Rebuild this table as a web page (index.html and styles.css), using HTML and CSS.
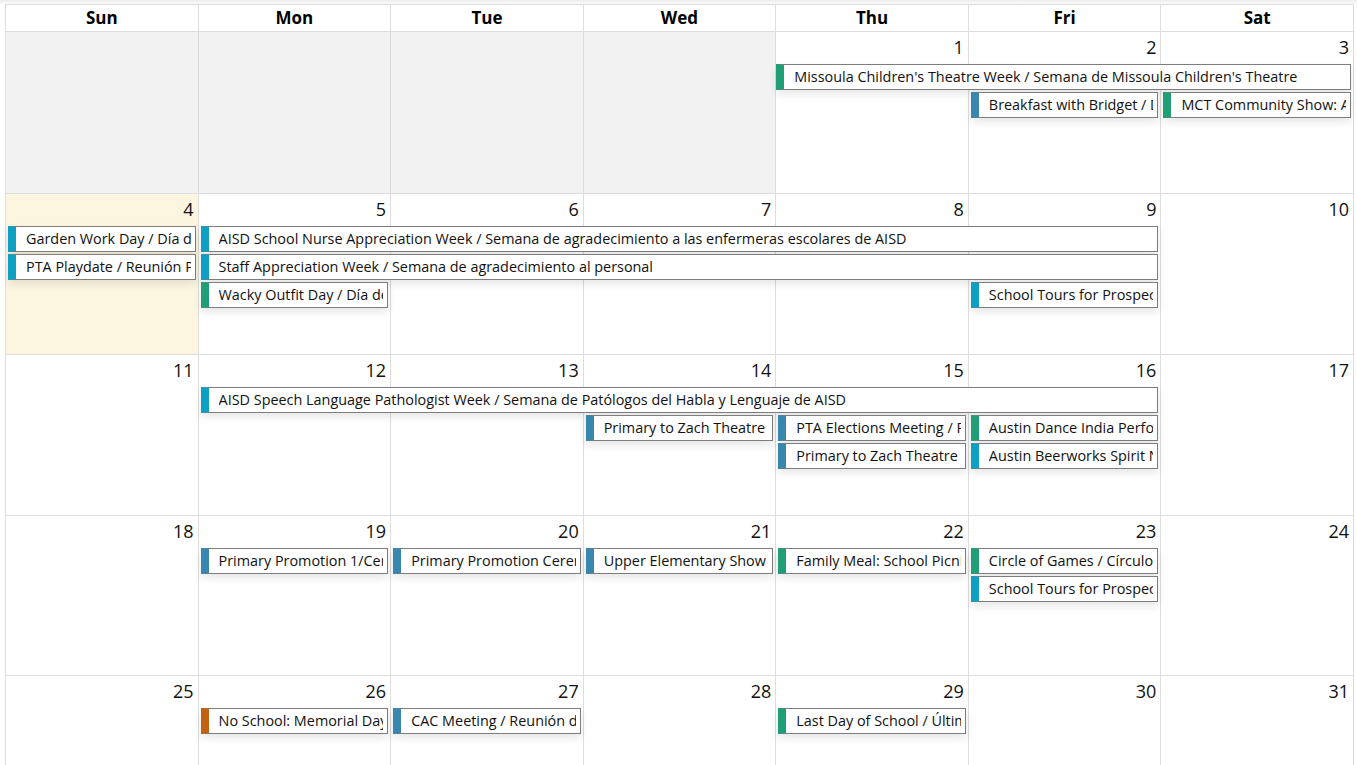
FILE: index.html
```html
<!DOCTYPE html>
<html lang="en">
<head>
<meta charset="utf-8">
<title>Calendar</title>
<link rel="stylesheet" href="styles.css">
</head>
<body>
<div class="topshade"></div>
<div class="calendar">
  <div class="head-row">
    <div class="head-cell">Sun</div>
    <div class="head-cell">Mon</div>
    <div class="head-cell">Tue</div>
    <div class="head-cell">Wed</div>
    <div class="head-cell">Thu</div>
    <div class="head-cell">Fri</div>
    <div class="head-cell">Sat</div>
  </div>

  <div class="week first">
    <div class="day other c1"></div>
    <div class="day other c2"></div>
    <div class="day other c3"></div>
    <div class="day other c4"></div>
    <div class="day c5"><span class="num">1</span></div>
    <div class="day c6"><span class="num">2</span></div>
    <div class="day c7"><span class="num">3</span></div>
    <div class="ev green r2 c5 s3 flush"><span class="t">Missoula Children's Theatre Week / Semana de Missoula Children's Theatre</span></div>
    <div class="ev steel r3 c6"><span class="t">Breakfast with Bridget / Desayuno con Bridget</span></div>
    <div class="ev green r3 c7"><span class="t">MCT Community Show: A Missoula Children's Theatre</span></div>
  </div>

  <div class="week">
    <div class="day today c1"><span class="num">4</span></div>
    <div class="day c2"><span class="num">5</span></div>
    <div class="day c3"><span class="num">6</span></div>
    <div class="day c4"><span class="num">7</span></div>
    <div class="day c5"><span class="num">8</span></div>
    <div class="day c6"><span class="num">9</span></div>
    <div class="day c7"><span class="num">10</span></div>
    <div class="ev cyan r2 c1"><span class="t">Garden Work Day / Día de trabajo en el jardín</span></div>
    <div class="ev cyan r2 c2 s5"><span class="t">AISD School Nurse Appreciation Week / Semana de agradecimiento a las enfermeras escolares de AISD</span></div>
    <div class="ev cyan r3 c1"><span class="t">PTA Playdate / Reunión PTA</span></div>
    <div class="ev cyan r3 c2 s5"><span class="t">Staff Appreciation Week / Semana de agradecimiento al personal</span></div>
    <div class="ev green r4 c2"><span class="t">Wacky Outfit Day / Día de atuendo loco</span></div>
    <div class="ev cyan r4 c6"><span class="t">School Tours for Prospective Families</span></div>
  </div>

  <div class="week">
    <div class="day c1"><span class="num">11</span></div>
    <div class="day c2"><span class="num">12</span></div>
    <div class="day c3"><span class="num">13</span></div>
    <div class="day c4"><span class="num">14</span></div>
    <div class="day c5"><span class="num">15</span></div>
    <div class="day c6"><span class="num">16</span></div>
    <div class="day c7"><span class="num">17</span></div>
    <div class="ev cyan r2 c2 s5"><span class="t">AISD Speech Language Pathologist Week / Semana de Patólogos del Habla y Lenguaje de AISD</span></div>
    <div class="ev steel r3 c4"><span class="t">Primary to Zach Theatre</span></div>
    <div class="ev steel r3 c5"><span class="t">PTA Elections Meeting / Reunión de elecciones</span></div>
    <div class="ev green r3 c6"><span class="t">Austin Dance India Performance</span></div>
    <div class="ev steel r4 c5"><span class="t">Primary to Zach Theatre</span></div>
    <div class="ev cyan r4 c6"><span class="t">Austin Beerworks Spirit Night</span></div>
  </div>

  <div class="week short">
    <div class="day c1"><span class="num">18</span></div>
    <div class="day c2"><span class="num">19</span></div>
    <div class="day c3"><span class="num">20</span></div>
    <div class="day c4"><span class="num">21</span></div>
    <div class="day c5"><span class="num">22</span></div>
    <div class="day c6"><span class="num">23</span></div>
    <div class="day c7"><span class="num">24</span></div>
    <div class="ev steel r2 c2"><span class="t">Primary Promotion 1/Ceremonia</span></div>
    <div class="ev steel r2 c3"><span class="t">Primary Promotion Ceremony</span></div>
    <div class="ev steel r2 c4"><span class="t">Upper Elementary Show</span></div>
    <div class="ev green r2 c5"><span class="t">Family Meal: School Picnic</span></div>
    <div class="ev green r2 c6"><span class="t">Circle of Games / Círculo de juegos</span></div>
    <div class="ev cyan r3 c6"><span class="t">School Tours for Prospective Families</span></div>
  </div>

  <div class="week short">
    <div class="day c1"><span class="num">25</span></div>
    <div class="day c2"><span class="num">26</span></div>
    <div class="day c3"><span class="num">27</span></div>
    <div class="day c4"><span class="num">28</span></div>
    <div class="day c5"><span class="num">29</span></div>
    <div class="day c6"><span class="num">30</span></div>
    <div class="day c7"><span class="num">31</span></div>
    <div class="ev orange r2 c2"><span class="t">No School: Memorial Day</span></div>
    <div class="ev steel r2 c3"><span class="t">CAC Meeting / Reunión del CAC</span></div>
    <div class="ev green r2 c5"><span class="t">Last Day of School / Último día de clases</span></div>
  </div>
</div>
</body>
</html>
```

FILE: styles.css
```css
* { box-sizing: border-box; }

html, body {
  margin: 0;
  padding: 0;
  background: #ffffff;
}

body {
  font-family: "Open Sans", "Liberation Sans", sans-serif;
  color: #111;
  padding: 4px 3px 0 5px;
  overflow: hidden;
  height: 765px;
}

.topshade {
  position: absolute;
  left: 0;
  top: 0;
  width: 100%;
  height: 5px;
  background: linear-gradient(#ececec, #ffffff);
}

.calendar {
  position: relative;
  width: 1349px;
  border-top: 1px solid #dddddd;
  border-left: 1px solid #dddddd;
}

.head-row {
  display: grid;
  grid-template-columns: repeat(7, 1fr);
}

.head-cell {
  height: 27px;
  border-right: 1px solid #dddddd;
  border-bottom: 1px solid #dddddd;
  text-align: center;
  font-weight: 700;
  font-size: 17px;
  line-height: 25px;
  color: #000;
}

.week {
  display: grid;
  grid-template-columns: repeat(7, 1fr);
  grid-template-rows: 32px 28px 28px 28px 1fr;
  height: 161px;
}

.week.first { height: 162px; }
.week.short { height: 160px; }

.day {
  grid-row: 1 / -1;
  border-right: 1px solid #dddddd;
  border-bottom: 1px solid #dddddd;
  text-align: right;
  padding: 3px 4px 0 0;
}

.day.other { background: #f2f2f2; }
.day.today { background: #fcf6e1; }

.num {
  font-size: 18px;
  line-height: 24px;
  color: #111;
}

.c1 { grid-column-start: 1; }
.c2 { grid-column-start: 2; }
.c3 { grid-column-start: 3; }
.c4 { grid-column-start: 4; }
.c5 { grid-column-start: 5; }
.c6 { grid-column-start: 6; }
.c7 { grid-column-start: 7; }

.s3 { grid-column-end: span 3; }
.s5 { grid-column-end: span 5; }

.r2 { grid-row: 2; }
.r3 { grid-row: 3; }
.r4 { grid-row: 4; }

.ev {
  height: 26px;
  margin: 0 3px 0 2px;
  background: #ffffff;
  border: 1px solid #7d7d7d;
  border-left-width: 8px;
  padding: 0 4px 0 10px;
  font-size: 14.4px;
  line-height: 24px;
  color: #111;
  white-space: nowrap;
  overflow: hidden;
  box-shadow: 0 4px 8px rgba(0, 0, 0, 0.10);
}

.ev.flush { margin-left: 0; }

.t {
  display: block;
  overflow: hidden;
}

.green { border-left-color: #1f9e78; }
.cyan { border-left-color: #0ea0c2; }
.steel { border-left-color: #3987ae; }
.orange { border-left-color: #c2610f; }
```
